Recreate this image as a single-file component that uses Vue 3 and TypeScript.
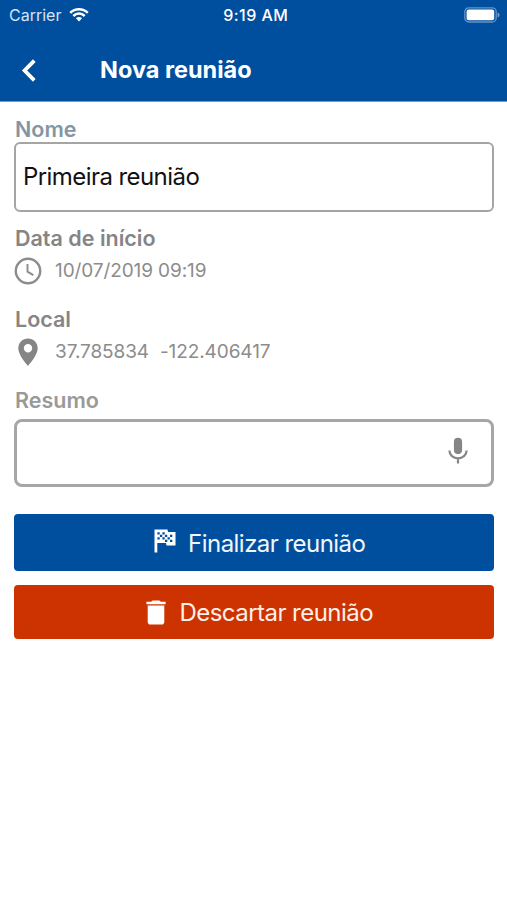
<script setup lang="ts">
import { ref } from 'vue'

const nome = ref<string>('Primeira reunião')
const resumo = ref<string>('')
const inicio = '10/07/2019 09:19'
const latitude = '37.785834'
const longitude = '-122.406417'
</script>

<template>
  <div class="screen">
    <header class="header">
      <div class="status">
        <div class="carrier">
          <span class="carrier-name">Carrier</span>
          <svg class="wifi" viewBox="0 0 20 15" fill="none" stroke="#fff" stroke-width="2.5">
            <path d="M1.2 5.8C6.2 .9 13.8 .9 18.8 5.8" />
            <path d="M4.3 9C7.6 5.8 12.4 5.8 15.7 9" />
            <path d="M10 14.4 6.9 11.3C8.6 9.7 11.4 9.7 13.1 11.3Z" fill="#fff" stroke="none" />
          </svg>
        </div>
        <span class="clock">9:19 AM</span>
        <svg class="battery" viewBox="0 0 36 16">
          <rect x=".8" y=".8" width="31.4" height="14.2" rx="4" fill="none" stroke="#6694c6" stroke-width="1.3" />
          <rect x="2.6" y="2.6" width="27.6" height="10.6" rx="2" fill="#fff" />
          <path d="M33.6 5.4C36 6.2 36 9.6 33.6 10.4Z" fill="#7fa6d0" />
        </svg>
      </div>
      <div class="nav">
        <button class="back" aria-label="Voltar">
          <svg viewBox="0 0 16 24" fill="none" stroke="#fff" stroke-width="3.8">
            <path d="M13.3 2.7 3.6 12.5l9.7 9.8" />
          </svg>
        </button>
        <h1 class="title">Nova reunião</h1>
      </div>
    </header>

    <main class="form">
      <label class="label label-nome" for="nome">Nome</label>
      <input id="nome" v-model="nome" class="input" type="text" spellcheck="false" />

      <h2 class="label label-data">Data de início</h2>
      <div class="info">
        <svg class="info-icon" viewBox="0 0 28 28" fill="none" stroke="#8c8c8c">
          <circle cx="14" cy="14" r="12.2" stroke-width="2.4" />
          <path d="M13.5 7v7.6l5.8 3.5" stroke-width="1.9" />
        </svg>
        <span class="info-text date">{{ inicio }}</span>
      </div>

      <h2 class="label label-local">Local</h2>
      <div class="info">
        <svg class="info-icon" viewBox="0 0 28 28">
          <path
            d="M14 .6C8.6.6 4.3 4.8 4.3 10.2 4.3 17.4 14 27.8 14 27.8s9.7-10.4 9.7-17.6C23.7 4.8 19.4.6 14 .6Zm0 13.8a4.2 4.2 0 1 1 0-8.4 4.2 4.2 0 0 1 0 8.4Z"
            fill="#858585"
          />
        </svg>
        <span class="info-text lat">{{ latitude }}</span>
        <span class="info-text lng">{{ longitude }}</span>
      </div>

      <label class="label label-resumo" for="resumo">Resumo</label>
      <div class="summary">
        <input id="resumo" v-model="resumo" class="summary-input" type="text" />
        <svg class="mic" viewBox="0 0 20 28">
          <rect x="5.9" y=".8" width="8.2" height="16.4" rx="4.1" fill="#858585" />
          <path d="M1.4 13.4C1.4 18.2 5.4 21.3 10 21.3S18.6 18.2 18.6 13.4M10 21.3V26.4" fill="none" stroke="#858585" stroke-width="2.2" />
        </svg>
      </div>

      <button class="btn finish">
        <svg class="flag" viewBox="0 0 22 24">
          <path d="M.5.5H13.5L14 3H21.5V16.5H12.5L12 14H3.3V23.5H.5Z" fill="#fff" />
          <path
            d="M3.4 3.3h2.3v2.3h-2.3ZM8.4 3.3h2.3v2.3h-2.3ZM5.9 5.8h2.3v2.3h-2.3ZM10.9 5.8h2.3v2.3h-2.3ZM3.4 8.3h2.3v2.3h-2.3ZM8.4 8.3h2.3v2.3h-2.3ZM13.5 8.3h2.3v2.3h-2.3ZM16 5.8h2.3v2.3h-2.3ZM11 10.8h2.3v2.3h-2.3ZM16 10.8h2.3v2.3h-2.3Z"
            fill="#004f9f"
          />
        </svg>
        <span class="finish-text">Finalizar reunião</span>
      </button>
      <button class="btn discard">
        <svg class="trash" viewBox="0 0 20 25" fill="#fff">
          <path d="M.4 1.7H5.2L6.6.4H13.4L14.8 1.7H19.6V4.3H.4Z" />
          <path d="M1.7 5.5H18.3V21.7Q18.3 24.5 15.5 24.5H4.5Q1.7 24.5 1.7 21.7Z" />
        </svg>
        <span class="discard-text">Descartar reunião</span>
      </button>
    </main>
  </div>
</template>

<style>
body {
  background: #fff;
}
</style>

<style scoped>
.screen {
  min-height: 900px;
  background: #fff;
  font-family: Inter, "Liberation Sans", sans-serif;
}
.header {
  box-sizing: border-box;
  height: 102px;
  background: #004f9f;
  border-bottom: 1px solid #6f9dca;
  color: #fff;
}
.status {
  display: grid;
  grid-template-columns: 1fr auto 1fr;
  align-items: center;
  height: 30px;
  padding: 0 7.5px 0 9px;
  font-size: 16px;
  line-height: 30px;
}
.carrier {
  display: flex;
  align-items: center;
  gap: 8px;
}
.carrier-name {
  color: #d5e5f5;
}
.wifi {
  width: 20px;
  height: 15px;
  margin-bottom: 2px;
}
.clock {
  padding-left: 3px;
  font-weight: 500;
  letter-spacing: 0.45px;
}
.battery {
  width: 36px;
  height: 16px;
  justify-self: end;
}
.nav {
  display: flex;
  align-items: center;
  height: 80px;
  padding-left: 21px;
}
.back {
  display: flex;
  width: 16px;
  height: 24px;
  margin: 0 63px 0 0;
  padding: 0;
  border: 0;
  background: none;
}
.title {
  margin: 0;
  font-size: 23.5px;
  font-weight: 650;
  line-height: 30px;
}
.form {
  display: flex;
  flex-direction: column;
  padding: 13.5px 13.5px 0 14px;
}
.label {
  margin: 0;
  padding-left: 1px;
  font-size: 21.5px;
  font-weight: 600;
  line-height: 26px;
  color: #858585;
}
.label-nome {
  color: #8496a3;
}
.input {
  box-sizing: border-box;
  width: 100%;
  height: 70px;
  margin-bottom: 13.5px;
  padding: 0 7px;
  border: 2px solid #a5a5a5;
  border-radius: 6px;
  background: #fff;
  font: 400 24px/30px Inter, "Liberation Sans", sans-serif;
  letter-spacing: -0.57px;
  color: #111;
  outline: none;
}
.info {
  display: flex;
  align-items: center;
  height: 28px;
  margin: 5.5px 0 21.5px;
}
.info-icon {
  width: 28px;
  height: 28px;
  margin-right: 13px;
}
.info-text {
  font-size: 19px;
  line-height: 28px;
  letter-spacing: -0.1px;
  color: #8c8c8c;
}
.lat {
  margin-right: 11px;
}
.label-resumo {
  color: #999;
}
.summary {
  box-sizing: border-box;
  display: flex;
  align-items: center;
  height: 68px;
  margin: 6px 0 27px;
  padding: 0 22.5px 0 8px;
  border: 3px solid #a6a6a6;
  border-radius: 8px;
}
.summary-input {
  flex: 1;
  min-width: 0;
  height: 40px;
  border: 0;
  background: none;
  font: 400 24px Inter, sans-serif;
  outline: none;
}
.mic {
  width: 20px;
  height: 28px;
  margin-bottom: 4px;
}
.btn {
  display: flex;
  align-items: center;
  justify-content: center;
  width: 100%;
  padding: 0 0 0 12px;
  border: 0;
  border-radius: 4px;
  color: #f1f6fb;
  font: 400 24px/30px Inter, "Liberation Sans", sans-serif;
  letter-spacing: -0.54px;
}
.finish {
  height: 57px;
  margin-bottom: 14px;
  background: #004f9f;
}
.finish-text,
.discard-text {
  padding-top: 2px;
}
.discard {
  height: 54px;
  background: #cc3300;
  color: #fff0e8;
}
.flag {
  width: 22px;
  height: 24px;
  margin: 0 12px 3px 0;
}
.trash {
  width: 20px;
  height: 25px;
  margin: 0 13px 0 0;
}
</style>
